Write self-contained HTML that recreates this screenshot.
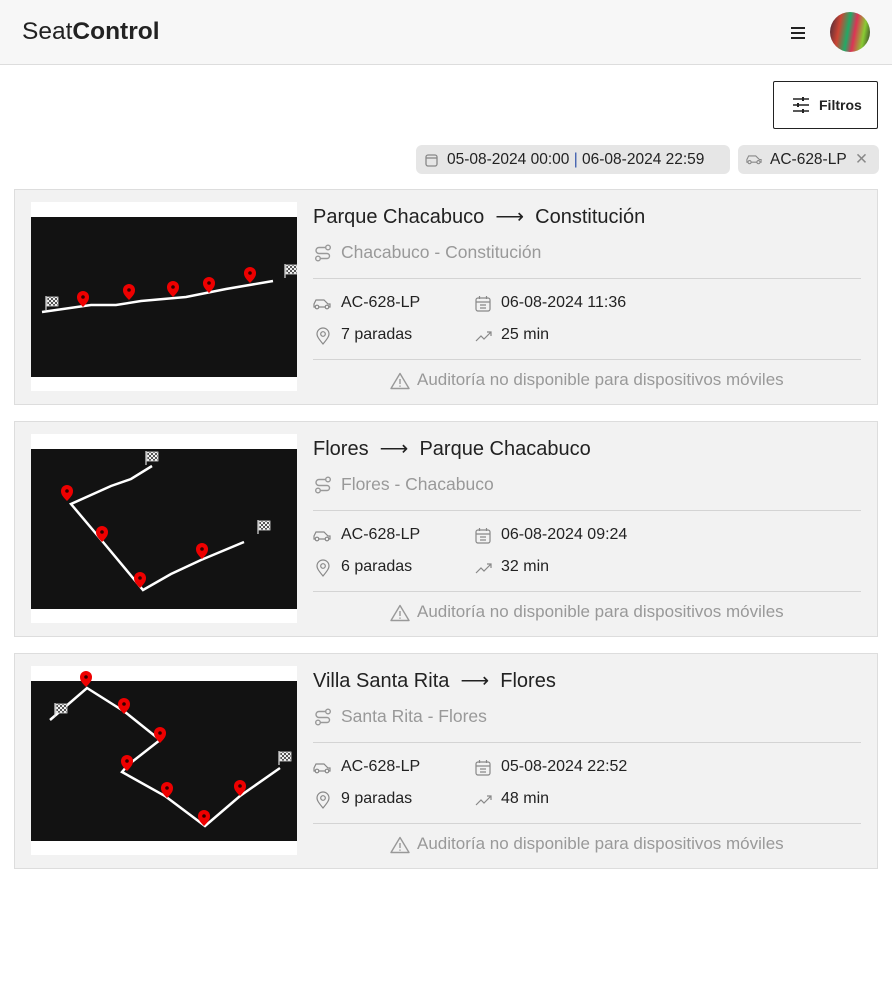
<!DOCTYPE html>
<html><head><meta charset="utf-8"><style>
*{box-sizing:border-box;margin:0;padding:0}
body{width:892px;height:993px;background:#fff;font-family:"Liberation Sans",sans-serif;color:#222;position:relative;overflow:hidden}
.hdr{position:absolute;left:0;top:0;width:892px;height:65px;background:#f7f7f7;border-bottom:1px solid #ddd}
.logo{position:absolute;left:22px;top:18px;font-size:24.5px;color:#222}
.burger{position:absolute;left:791px;top:27px;width:14px}
.burger i{display:block;height:1.6px;background:#222;margin-bottom:3.4px}
.av{position:absolute;left:830px;top:12px;width:40px;height:40px;border-radius:50%;background:linear-gradient(100deg,#3a2a3a 0%,#c43 25%,#2a6 45%,#d35 60%,#8c3 80%,#2b2b2b 100%)}
.filt{position:absolute;left:773px;top:81px;width:105px;height:48px;border:1px solid #222;border-radius:2px;background:#fff;font-size:14px;font-weight:bold}
.chip{position:absolute;top:145px;height:29px;background:#e6e6e6;border-radius:6px;font-size:15.5px;line-height:29px;color:#222}
.card{position:absolute;left:14px;width:864px;height:216px;background:#f2f2f2;border:1px solid #ddd}
.map{position:absolute;left:16px;top:12px;width:266px;height:189px;background:#fff}
.t{position:absolute;left:298px;top:14px;font-size:20px;color:#222}
.sub{position:absolute;left:326px;top:52px;font-size:17.5px;color:#999}
.hr{position:absolute;left:298px;width:548px;height:1px;background:#d4d4d4}
.f{position:absolute;font-size:16px;color:#222}
.w{position:absolute;left:402px;top:180px;font-size:17px;color:#999;white-space:nowrap}
.ic{position:absolute}
</style></head><body>
<svg width="0" height="0" style="position:absolute">
<defs>
<pattern id="chk" width="4" height="4" patternUnits="userSpaceOnUse"><rect width="4" height="4" fill="#eee"/><rect width="2" height="2" fill="#555"/><rect x="2" y="2" width="2" height="2" fill="#555"/></pattern>
<symbol id="pin" viewBox="0 0 12 16"><path d="M6,16C1,11 0,9 0,6a6 6 0 0 1 12 0c0 3-1 5-6 10z" fill="#e00"/><circle cx="6" cy="6" r="1.8" fill="#300"/></symbol>
<symbol id="flag" viewBox="0 0 14 14"><path d="M1 0v14" stroke="#ddd" stroke-width="1.2"/><rect x="2" y="1" width="11" height="9" fill="url(#chk)" stroke="#ddd" stroke-width="0.8"/></symbol>
<symbol id="route" viewBox="0 0 18 18" ><g fill="none" stroke="#999" stroke-width="1.4"><circle cx="14" cy="3.5" r="2.3"/><circle cx="4" cy="14.5" r="2.3"/><path d="M11.7 3.5H5a3 3 0 0 0 0 6h8a2.5 2.5 0 0 1 0 5H6.3"/></g></symbol>
<symbol id="car" viewBox="0 0 18 12"><g fill="none" stroke="#888" stroke-width="1.2"><path d="M2 9H1V6l2-4h8l4 4h2v3h-1M6 9h6"/><circle cx="4" cy="9" r="1.8"/><circle cx="14" cy="9" r="1.8"/></g></symbol>
<symbol id="cal" viewBox="0 0 16 17"><g fill="none" stroke="#888" stroke-width="1.2"><rect x="1" y="3" width="14" height="13" rx="2"/><path d="M1 7h14M4.5 1v3M11.5 1v3M5 10h6M5 13h6"/></g></symbol>
<symbol id="loc" viewBox="0 0 14 18"><g fill="none" stroke="#888" stroke-width="1.2"><path d="M7 17C2 11 1 9 1 7a6 6 0 0 1 12 0c0 2-1 4-6 10z"/><circle cx="7" cy="7" r="2.3"/></g></symbol>
<symbol id="trend" viewBox="0 0 18 12"><g fill="none" stroke="#888" stroke-width="1.2"><path d="M1 11l5-5 3 3 7-7M12 2h4v4"/></g></symbol>
<symbol id="warn" viewBox="0 0 20 18"><g fill="none" stroke="#999" stroke-width="1.4"><path d="M10 1.5L1 16.5h18z" stroke-linejoin="round"/><path d="M10 7v5M10 13.5v1.2"/></g></symbol>
</defs></svg>
<div class="hdr">
<div class="logo">Seat<b>Control</b></div>
<div class="burger"><i></i><i></i><i></i></div>
<div class="av"></div>
</div>
<div class="filt">
<svg style="position:absolute;left:18px;top:14px" width="18" height="18" viewBox="0 0 18 18" stroke="#222" stroke-width="1.5" fill="none"><path d="M1 3h16M1 9h16M1 15h16"/><path d="M11 1v4M6 7v4M11 13v4" stroke-width="2"/></svg>
<span style="position:absolute;left:45px;top:15px">Filtros</span></div>
<div class="chip" style="left:416px;width:314px"><svg style="position:absolute;left:9px;top:8px" width="13" height="14" viewBox="0 0 13 14" fill="none" stroke="#888" stroke-width="1.3"><rect x="1" y="2" width="11" height="11" rx="2"/><path d="M1 5h11"/></svg><span style="position:absolute;left:31px">05-08-2024 00:00 <span style="color:#35a">|</span> 06-08-2024 22:59</span></div>
<div class="chip" style="left:738px;width:141px"><svg style="position:absolute;left:8px;top:9px" width="16" height="11" viewBox="0 0 18 12"><use href="#car"/></svg><span style="position:absolute;left:32px">AC-628-LP</span><span style="position:absolute;left:117px;color:#888">✕</span></div>

<div class="card" style="top:189px">
<div class="map"><svg width="266" height="189"><rect y="15" width="266" height="160" fill="#121212"/>
<polyline points="11,110 60,103 85,103 110,99 155,95 195,87 242,79" fill="none" stroke="#fff" stroke-width="2.5"/>
<use href="#pin" x="46" y="89" width="12" height="16"/><use href="#pin" x="92" y="82" width="12" height="16"/><use href="#pin" x="136" y="79" width="12" height="16"/><use href="#pin" x="172" y="75" width="12" height="16"/><use href="#pin" x="213" y="65" width="12" height="16"/>
<use href="#flag" x="14" y="94" width="14" height="14"/><use href="#flag" x="253" y="62" width="14" height="14"/>
</svg></div>
<div class="t">Parque Chacabuco &nbsp;⟶&nbsp; Constitución</div>
<svg class="ic" style="left:299px;top:54px" width="18" height="18"><use href="#route"/></svg>
<div class="sub">Chacabuco - Constitución</div>
<div class="hr" style="top:88px"></div>
<svg class="ic" style="left:298px;top:108px" width="18" height="12"><use href="#car"/></svg><div class="f" style="left:326px;top:104px">AC-628-LP</div>
<svg class="ic" style="left:460px;top:105px" width="16" height="17"><use href="#cal"/></svg><div class="f" style="left:486px;top:104px">06-08-2024 11:36</div>
<svg class="ic" style="left:301px;top:137px" width="14" height="18"><use href="#loc"/></svg><div class="f" style="left:326px;top:136px">7 paradas</div>
<svg class="ic" style="left:460px;top:140px" width="18" height="12"><use href="#trend"/></svg><div class="f" style="left:486px;top:136px">25 min</div>
<div class="hr" style="top:169px"></div>
<svg class="ic" style="left:375px;top:182px" width="20" height="18"><use href="#warn"/></svg><div class="w">Auditoría no disponible para dispositivos móviles</div>
</div>

<div class="card" style="top:421px">
<div class="map"><svg width="266" height="189"><rect y="15" width="266" height="160" fill="#121212"/>
<polyline points="121,32 100,45 80,52 40,70 72,108 112,156 140,140 170,126 213,108" fill="none" stroke="#fff" stroke-width="2.5"/>
<use href="#pin" x="30" y="51" width="12" height="16"/><use href="#pin" x="65" y="92" width="12" height="16"/><use href="#pin" x="103" y="138" width="12" height="16"/><use href="#pin" x="165" y="109" width="12" height="16"/>
<use href="#flag" x="114" y="17" width="14" height="14"/><use href="#flag" x="226" y="86" width="14" height="14"/>
</svg></div>
<div class="t">Flores &nbsp;⟶&nbsp; Parque Chacabuco</div>
<svg class="ic" style="left:299px;top:54px" width="18" height="18"><use href="#route"/></svg>
<div class="sub">Flores - Chacabuco</div>
<div class="hr" style="top:88px"></div>
<svg class="ic" style="left:298px;top:108px" width="18" height="12"><use href="#car"/></svg><div class="f" style="left:326px;top:104px">AC-628-LP</div>
<svg class="ic" style="left:460px;top:105px" width="16" height="17"><use href="#cal"/></svg><div class="f" style="left:486px;top:104px">06-08-2024 09:24</div>
<svg class="ic" style="left:301px;top:137px" width="14" height="18"><use href="#loc"/></svg><div class="f" style="left:326px;top:136px">6 paradas</div>
<svg class="ic" style="left:460px;top:140px" width="18" height="12"><use href="#trend"/></svg><div class="f" style="left:486px;top:136px">32 min</div>
<div class="hr" style="top:169px"></div>
<svg class="ic" style="left:375px;top:182px" width="20" height="18"><use href="#warn"/></svg><div class="w">Auditoría no disponible para dispositivos móviles</div>
</div>

<div class="card" style="top:653px">
<div class="map"><svg width="266" height="189"><rect y="15" width="266" height="160" fill="#121212"/>
<polyline points="19,54 56,22 94,46 129,74 97,99 91,106 134,130 174,160 209,130 249,102" fill="none" stroke="#fff" stroke-width="2.5"/>
<use href="#pin" x="49" y="5" width="12" height="16"/><use href="#pin" x="87" y="32" width="12" height="16"/><use href="#pin" x="123" y="61" width="12" height="16"/><use href="#pin" x="90" y="89" width="12" height="16"/><use href="#pin" x="130" y="116" width="12" height="16"/><use href="#pin" x="167" y="144" width="12" height="16"/><use href="#pin" x="203" y="114" width="12" height="16"/>
<use href="#flag" x="23" y="37" width="14" height="14"/><use href="#flag" x="247" y="85" width="14" height="14"/>
</svg></div>
<div class="t">Villa Santa Rita &nbsp;⟶&nbsp; Flores</div>
<svg class="ic" style="left:299px;top:54px" width="18" height="18"><use href="#route"/></svg>
<div class="sub">Santa Rita - Flores</div>
<div class="hr" style="top:88px"></div>
<svg class="ic" style="left:298px;top:108px" width="18" height="12"><use href="#car"/></svg><div class="f" style="left:326px;top:104px">AC-628-LP</div>
<svg class="ic" style="left:460px;top:105px" width="16" height="17"><use href="#cal"/></svg><div class="f" style="left:486px;top:104px">05-08-2024 22:52</div>
<svg class="ic" style="left:301px;top:137px" width="14" height="18"><use href="#loc"/></svg><div class="f" style="left:326px;top:136px">9 paradas</div>
<svg class="ic" style="left:460px;top:140px" width="18" height="12"><use href="#trend"/></svg><div class="f" style="left:486px;top:136px">48 min</div>
<div class="hr" style="top:169px"></div>
<svg class="ic" style="left:375px;top:182px" width="20" height="18"><use href="#warn"/></svg><div class="w">Auditoría no disponible para dispositivos móviles</div>
</div>
</body></html>
